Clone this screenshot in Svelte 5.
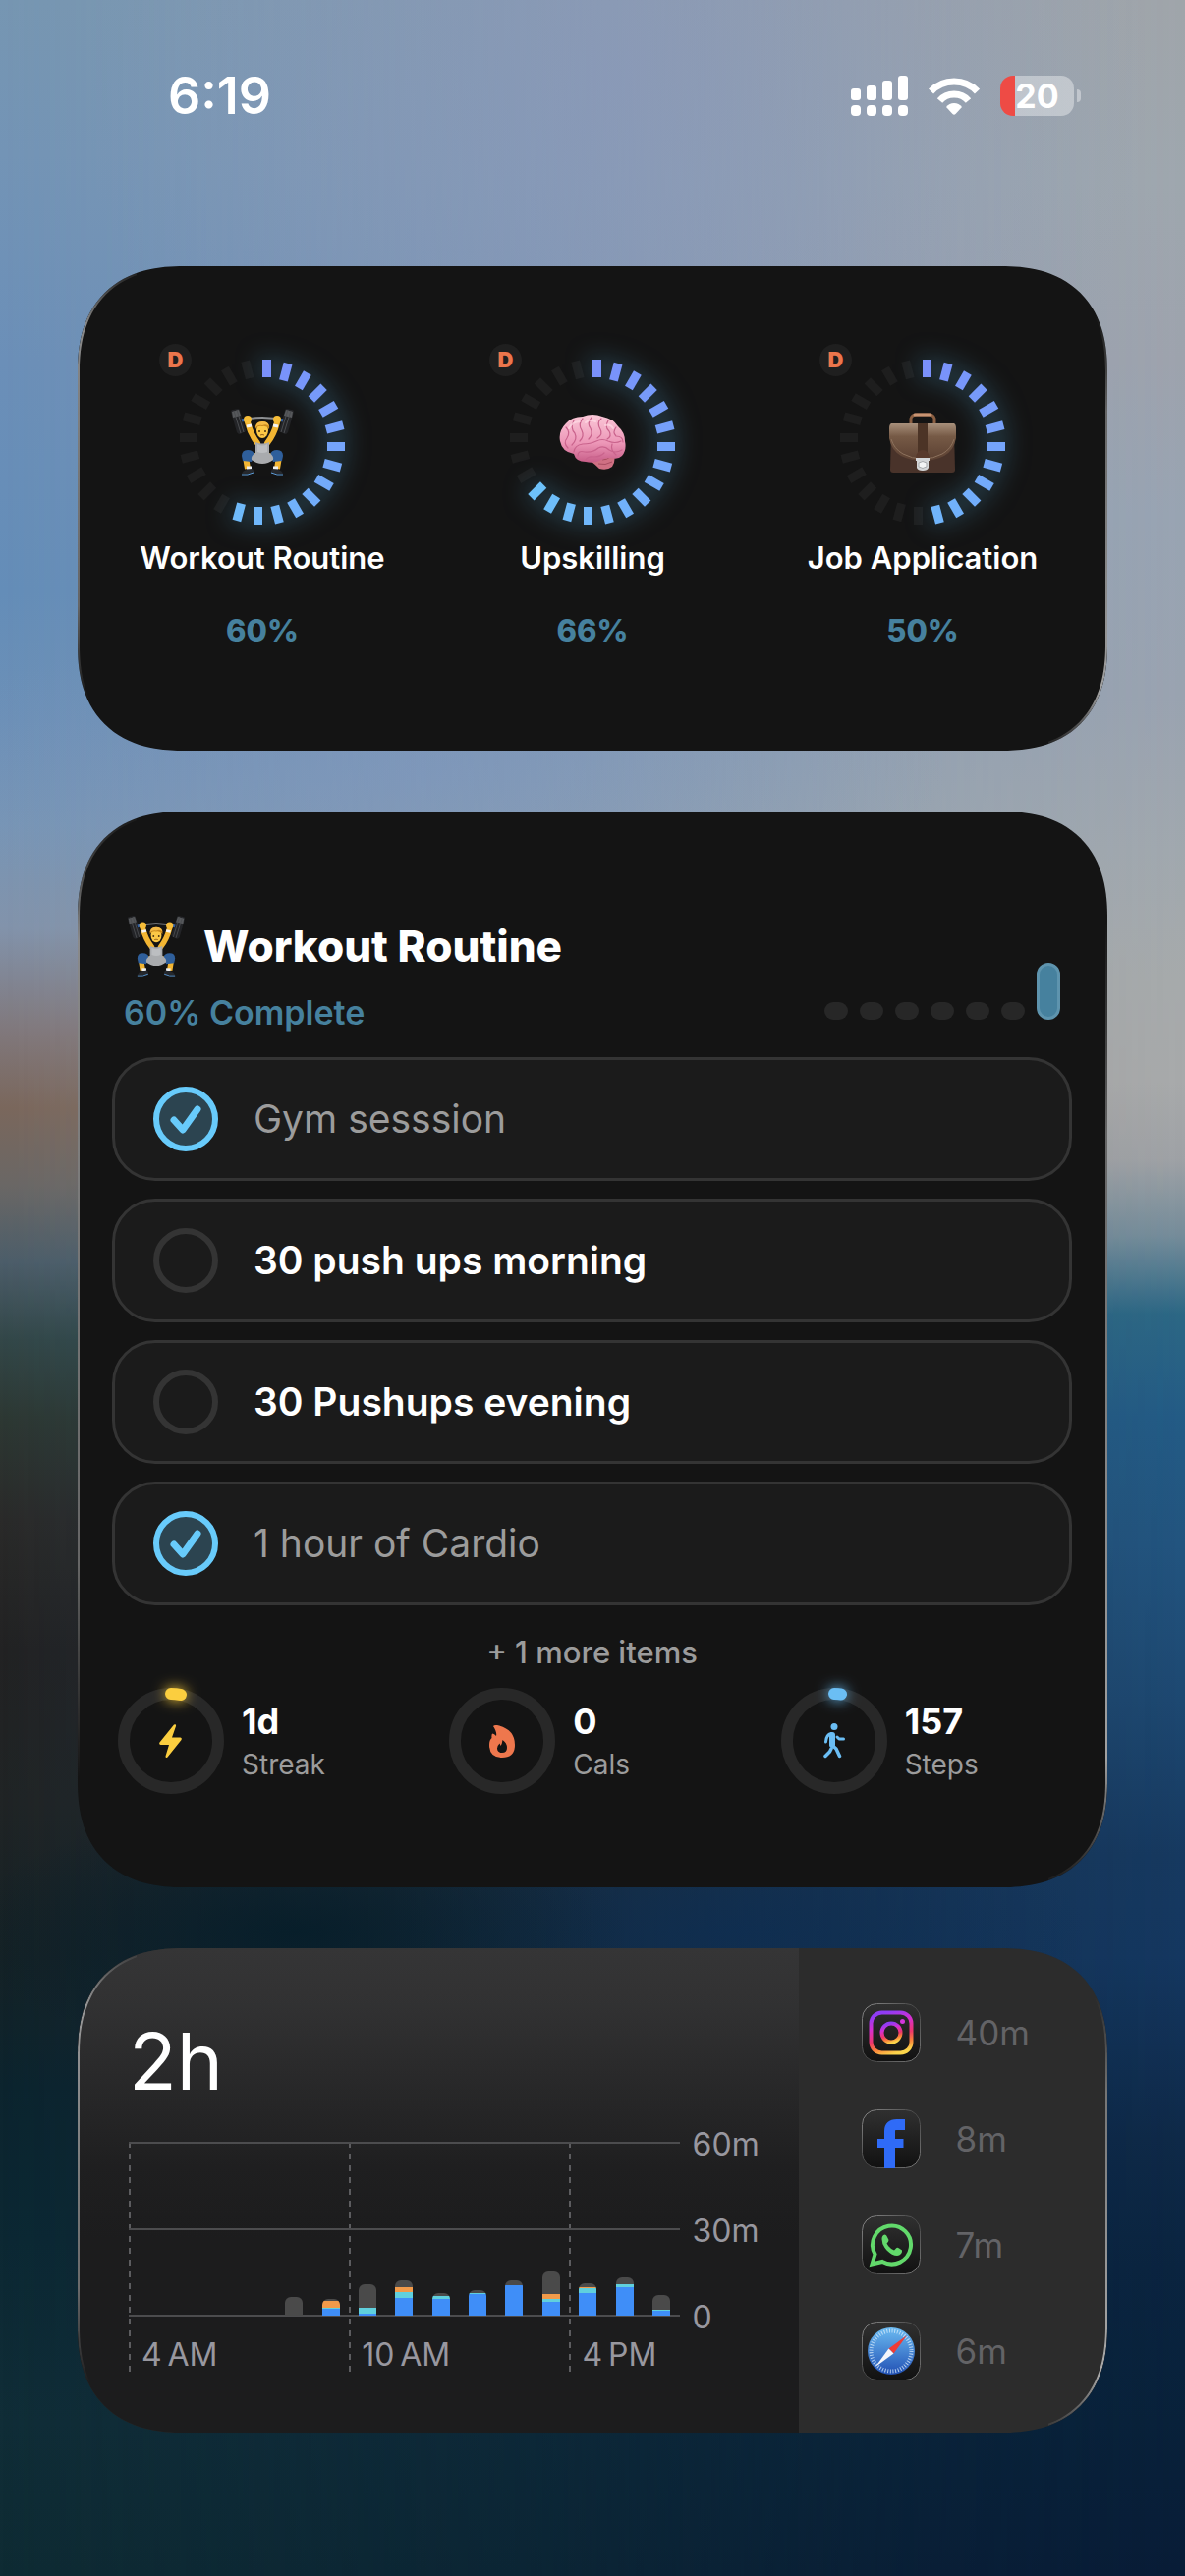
<script>
  const habits = [
    { name: 'Workout Routine', percent: 60, lit: 14, icon: 'lifter' },
    { name: 'Upskilling', percent: 66, lit: 16, icon: 'brain' },
    { name: 'Job Application', percent: 50, lit: 12, icon: 'case' }
  ];

  const tickCount = 24;
  const ticks = Array.from({ length: tickCount }, (_, i) => i);

  // Lit ticks run from violet blue to sky blue around the ring.
  function tickColor(i) {
    const t = i / 16;
    const mix = (a, b) => Math.round(a + (b - a) * t);
    return `rgb(${mix(122, 108)}, ${mix(144, 196)}, 250)`;
  }

  const week = [false, false, false, false, false, false, true];

  let tasks = $state([
    { label: 'Gym sesssion', done: true },
    { label: '30 push ups morning', done: false },
    { label: '30 Pushups evening', done: false },
    { label: '1 hour of Cardio', done: true }
  ]);

  const stats = [
    { value: '1d', label: 'Streak', icon: 'bolt', arc: 10 },
    { value: '0', label: 'Cals', icon: 'flame', arc: 0 },
    { value: '157', label: 'Steps', icon: 'walk', arc: 7 }
  ];

  // Hourly usage from 4 AM, stacked [blue, teal, orange, grey].
  const hours = [
    [0, 0, 0, 0], [0, 0, 0, 0], [0, 0, 0, 0], [0, 0, 0, 0],
    [0, 0, 0, 19], [7, 1, 7, 2], [2, 6, 0, 24], [18, 6, 5, 7],
    [17, 3, 0, 3], [22, 1, 0, 3], [31, 0, 0, 5], [14, 3, 5, 23],
    [23, 5, 1, 4], [29, 3, 0, 7], [5, 1, 0, 15]
  ];
  const kinds = ['blue', 'teal', 'orange', 'grey'];

  const apps = [
    { name: 'Instagram', time: '40m' },
    { name: 'Facebook', time: '8m' },
    { name: 'WhatsApp', time: '7m' },
    { name: 'Safari', time: '6m' }
  ];
</script>

{#snippet lifter()}
  <svg viewBox="0 0 64 68" aria-hidden="true">
    <path d="M10 12Q32 6 54 12" fill="none" stroke="#8d8f92" stroke-width="2" />
    {#each [1, -1] as side}
      <g transform={side === 1 ? '' : 'translate(64 0) scale(-1 1)'}>
        <path d="M0 3Q0 1 2 1L7 0Q9 0 9 2L15 22Q15 24 13 24L9 26Q7 26 6 24Z" fill="#232427" />
        <path d="M1 3L8 1L10 7L2 9Z" fill="#56585b" />
        <path d="M3 2L10 25M6 1L13 24" stroke="#4b4d50" stroke-width="1" />
        <path d="M11 12L15 11" stroke="#2d5fa8" stroke-width="3" />
        <path d="M17 14Q20 26 27 35" fill="none" stroke="#f2b532" stroke-width="6" stroke-linecap="round" />
        <path d="M16 18L21 17" stroke="#f4f4f4" stroke-width="3" />
        <circle cx="17" cy="11" r="4" fill="#f7bd38" />
        <path d="M28 48L15 49L17 61" fill="none" stroke="#f2b532" stroke-width="6" stroke-linejoin="round" />
        <path d="M11 48Q11 42 17 42Q23 42 24 47L21 54L12 53Z" fill="#2f5f9b" />
        <path d="M16 60L21 60" stroke="#eef0f2" stroke-width="3" />
        <path d="M11 66Q12 63 16 62L22 61Q24 64 23 66Z" fill="#25282d" />
        <path d="M11 67H17L23 65" fill="none" stroke="#5b9ad6" stroke-width="1" />
      </g>
    {/each}
    <path d="M25 34Q32 37 39 34L39 45Q44 48 43 52Q38 56 32 56Q26 56 21 52Q20 48 25 45Z" fill="#a9abae" />
    <path d="M27 36Q32 39 37 36L37 44Q32 46 27 44Z" fill="#bcbec1" />
    <ellipse cx="32" cy="22" rx="6" ry="8" fill="#fcc846" />
    <path d="M25 21Q24 13 32 13Q40 13 39 21Q36 17 32 18Q27 17 25 21Z" fill="#c98a1e" />
    <path d="M25 19Q26 13 32 13Q38 13 39 18Q36 15 32 17Q28 16 25 19Z" fill="#f5bb46" />
    <circle cx="29" cy="23" r="1" fill="#4a3212" />
    <circle cx="35" cy="23" r="1" fill="#4a3212" />
    <path d="M30 27Q32 26 34 27" fill="none" stroke="#94611b" />
  </svg>
{/snippet}

{#snippet brain()}
  <svg viewBox="0 0 68 56" aria-hidden="true">
    <defs>
      <linearGradient id="brain-fill" x1="0" y1="0" x2="0" y2="1">
        <stop offset="0" stop-color="#fbc9d8" />
        <stop offset=".6" stop-color="#ec96b7" />
        <stop offset="1" stop-color="#c75d87" />
      </linearGradient>
    </defs>
    <path d="M36 42L56 39Q58 47 54 53Q49 57 41 55Q36 50 33 48Z" fill="#cf7083" />
    <path d="M44 46Q49 46 52 43M40 50Q47 52 54 48" fill="none" stroke="#a84d62" stroke-width="1" />
    <path d="M1 27Q-1 17 7 9Q13 2 24 2Q34-2 44 2Q55 4 60 12Q67 18 67 27Q69 36 64 42Q60 46 53 44Q47 44 43 46Q36 50 27 48Q17 48 15 40Q3 38 1 27Z" fill="url(#brain-fill)" />
    <g fill="none" stroke="#c9638c" stroke-width="1.2" stroke-linecap="round">
      <path d="M7 13Q12 18 8 24Q4 29 9 34M15 6Q11 14 16 19Q19 25 13 31M24 4Q19 10 23 16Q26 22 21 27M33 3Q28 9 32 14Q35 20 30 25M43 4Q38 8 42 15Q45 20 39 24" />
      <path d="M50 6Q46 13 51 17Q54 22 49 25M58 13Q54 18 58 22Q65 22 65 28M15 38Q16 31 24 30Q32 30 38 27Q44 24 50 27Q57 30 63 27" />
      <path d="M19 42Q19 36 26 38Q34 39 40 34Q46 31 51 36Q57 40 64 36M27 46Q29 42 36 43Q42 43 46 39M54 30Q52 36 58 41" />
    </g>
    <path d="M10 14Q14 7 21 7M27 8Q31 4 37 7M47 11Q52 9 55 14" fill="none" stroke="#ffdce6" stroke-width="2" stroke-linecap="round" opacity=".7" />
  </svg>
{/snippet}

{#snippet briefcase()}
  <svg viewBox="0 0 68 61" aria-hidden="true">
    <defs>
      <linearGradient id="case-fill" x1="0" y1="0" x2="0" y2="1">
        <stop offset="0" stop-color="#a8907b" />
        <stop offset=".35" stop-color="#765a46" />
        <stop offset="1" stop-color="#5a3f31" />
      </linearGradient>
    </defs>
    <path d="M22 12V6Q23 2 28 2H40Q45 2 46 6V12" fill="none" stroke="#8b5f42" stroke-width="3" />
    <path d="M26 2H42" stroke="#c99472" stroke-width="3" stroke-linecap="round" />
    <path d="M2 20H66L67 58Q67 61 64 61H4Q1 61 1 58Z" fill="#49332a" />
    <path d="M2 11H66Q68 12 68 16V26Q66 38 56 44Q46 49 34 49Q22 49 12 44Q2 38 0 26V16Q0 12 2 11Z" fill="url(#case-fill)" />
    <path d="M2 27Q5 37 14 42Q23 47 34 47Q45 47 54 42Q63 37 66 27" fill="none" stroke="#8d725d" stroke-width="1" />
    <path d="M29 11H39V40Q34 43 29 40Z" fill="#4c3426" />
    <path d="M27 46Q28 38 34 38Q40 38 41 46Z" fill="#58392b" />
    <path d="M27 46H41V49H40V56Q39 59 34 59Q29 59 28 56V49H27Z" fill="#d4d6d8" />
    <path d="M30 51Q34 48 38 51V55Q34 58 30 55Z" fill="#f3f4f5" stroke="#a6a9ac" />
  </svg>
{/snippet}

<div class="screen">
  <header class="status">
    <time>6:19</time>
    <div class="indicators">
      <svg class="signal" viewBox="0 0 58 41" role="img" aria-label="Signal">
        <g fill="#fff">
          <rect x="0" y="13" width="10" height="12" rx="3" />
          <rect x="16" y="10" width="10" height="15" rx="3" />
          <rect x="32" y="5" width="10" height="20" rx="3" />
          <rect x="48" y="0" width="10" height="25" rx="3" />
          <rect x="0" y="30" width="10" height="11" rx="4" />
          <rect x="16" y="30" width="10" height="11" rx="4" />
          <rect x="32" y="30" width="10" height="11" rx="4" />
          <rect x="48" y="30" width="10" height="11" rx="4" />
        </g>
      </svg>
      <svg class="wifi" viewBox="0 0 52 38" role="img" aria-label="Wi-Fi">
        <g fill="none" stroke="#fff" stroke-width="7">
          <path d="M2.5 14Q12 4 26 4Q40 4 49.500 14" />
          <path d="M11.500 23.500Q17 17 26 17Q35 17 40.500 23.500" />
        </g>
        <path d="M18 30Q21 26 26 26Q31 26 34 30L27.500 37Q26 38.500 24.500 37Z" fill="#fff" />
      </svg>
      <div class="battery"><span class="charge">20</span></div>
    </div>
  </header>

  <main>
    <section class="card habits">
      {#each habits as habit}
        <article class="habit">
          <div class="ring">
            <svg class="ticks" viewBox="-84 -84 168 168" aria-hidden="true">
              {#each ticks.slice(habit.lit) as i}
                <rect class="off" x="0" y="-84" width="9" height="18" transform="rotate({i * 15})" />
              {/each}
              <g class="glow">
                {#each ticks.slice(0, habit.lit) as i}
                  <rect x="0" y="-84" width="9" height="18" fill={tickColor(i)} transform="rotate({i * 15})" />
                {/each}
              </g>
            </svg>
            <div class="emoji {habit.icon}">
              {#if habit.icon === 'lifter'}{@render lifter()}{:else if habit.icon === 'brain'}{@render brain()}{:else}{@render briefcase()}{/if}
            </div>
            <span class="badge">D</span>
          </div>
          <h2>{habit.name}</h2>
          <p>{habit.percent}%</p>
        </article>
      {/each}
    </section>

    <section class="card routine">
      <div class="head">
        <div>
          <div class="title">
            {@render lifter()}
            <h1>Workout Routine</h1>
          </div>
          <p class="progress">60% Complete</p>
        </div>
        <div class="week">
          {#each week as active}<i class:active></i>{/each}
        </div>
      </div>

      <div class="tasks">
        {#each tasks as task}
          <label class="task" class:done={task.done}>
            <span class="tick">
              <input type="checkbox" bind:checked={task.done} />
              <svg viewBox="0 0 66 66" aria-hidden="true">
                <path d="M21 34L30 44L45 23" />
              </svg>
            </span>
            <span>{task.label}</span>
          </label>
        {/each}
      </div>

      <p class="more">+ 1 more items</p>

      <div class="stats">
        {#each stats as stat}
          <div class="stat">
            <svg class="dial {stat.icon}" viewBox="0 0 108 108" aria-hidden="true">
              <circle cx="54" cy="54" r="48" fill="none" stroke="#282828" stroke-width="12" />
              {#if stat.arc}
                <circle class="arc" cx="54" cy="54" r="48" stroke-dasharray="{stat.arc} 400" transform="rotate(-90 54 54)" />
              {/if}
              {#if stat.icon === 'bolt'}
                <path fill="currentColor" d="M57 37.500Q59.500 36.500 59 39L55 50.500H63.500Q65.500 51 64.500 53L50.500 70.500Q48.500 72 48.500 69.500L52 58H43.500Q41.500 57.500 42.500 55.500Z" />
              {:else if stat.icon === 'flame'}
                <path fill="currentColor" fill-rule="evenodd" d="M45 39Q46 37.500 49 38Q67 42 67 58Q67 71 54 71Q41 71 41 58Q41 53 43.500 51Q43 47 44.500 46.500Q46 46.500 48 49Q49 45 45 39ZM54.500 53Q54 57 52.500 59L51.500 56.500Q49 59 49 61.500Q49 66 54 66Q59 66 59 61Q59 56 54.500 53Z" />
              {:else}
                <g fill="none" stroke="currentColor" stroke-linecap="round" stroke-linejoin="round">
                  <circle cx="54" cy="39.500" r="3.500" fill="currentColor" stroke="none" />
                  <path d="M52 48V58" stroke-width="6" />
                  <path d="M51 46.500Q46 47.500 45.500 55" stroke-width="3" />
                  <path d="M57 50L59 52H63.500" stroke-width="3" />
                  <path d="M51.500 58L56 62L59.500 69.500M51 62L49.500 65L45 69.500" stroke-width="3.500" />
                </g>
              {/if}
            </svg>
            <div>
              <strong>{stat.value}</strong>
              <span>{stat.label}</span>
            </div>
          </div>
        {/each}
      </div>
    </section>

    <section class="card usage">
      <div class="today">
        <h2>2h</h2>
        <div class="chart">
          <div class="plot">
            <div class="columns">
              <span>4&thinsp;AM</span><span>10&thinsp;AM</span><span>4&thinsp;PM</span>
            </div>
            <div class="lines"><i></i><i></i></div>
            <div class="bars">
              {#each hours as hour}
                <div class="bar">
                  {#each hour as size, k}
                    {#if size}<i class={kinds[k]} style:height="{size}px"></i>{/if}
                  {/each}
                </div>
              {/each}
            </div>
          </div>
          <div class="axis"><span>60m</span><span>30m</span><span>0</span></div>
        </div>
      </div>

      <ul class="apps">
        {#each apps as app}
          <li>
            <svg viewBox="0 0 60 60" role="img" aria-label={app.name}>
              <defs>
                <linearGradient id="tile" x1="0" y1="0" x2="0" y2="1">
                  <stop offset="0" stop-color="#303030" />
                  <stop offset="1" stop-color="#111" />
                </linearGradient>
                <linearGradient id="tile-edge" x1="0" y1="0" x2="1" y2="1">
                  <stop offset="0" stop-color="#8a8a8a" />
                  <stop offset=".5" stop-color="#444" />
                  <stop offset="1" stop-color="#777" />
                </linearGradient>
                <linearGradient id="insta" x1=".35" y1="0" x2=".65" y2="1">
                  <stop offset="0" stop-color="#8f3cf5" />
                  <stop offset=".3" stop-color="#d62fd0" />
                  <stop offset=".6" stop-color="#f0366a" />
                  <stop offset=".8" stop-color="#f9813a" />
                  <stop offset="1" stop-color="#fbd44a" />
                </linearGradient>
                <linearGradient id="compass" x1="0" y1="0" x2="0" y2="1">
                  <stop offset="0" stop-color="#6cbcf2" />
                  <stop offset="1" stop-color="#2150b4" />
                </linearGradient>
              </defs>
              <rect x=".5" y=".5" width="59" height="59" rx="15" fill="url(#tile)" stroke="url(#tile-edge)" />
              {#if app.name === 'Instagram'}
                <rect x="9.500" y="9.500" width="41" height="41" rx="11" fill="none" stroke="url(#insta)" stroke-width="4" />
                <circle cx="30" cy="30" r="9.500" fill="none" stroke="url(#insta)" stroke-width="4" />
                <circle cx="41.500" cy="18.500" r="2.500" fill="#d437dd" />
              {:else if app.name === 'Facebook'}
                <g fill="none" stroke="#2f6bf7">
                  <path d="M28.500 60V22Q28.500 15.500 35.500 15.500H44" stroke-width="11" />
                  <path d="M16 34.500H42.500" stroke-width="9" />
                </g>
              {:else if app.name === 'WhatsApp'}
                <path d="M10.500 49.500L13.500 39.500A19.500 19.500 0 1 1 21 47Z" fill="none" stroke="#62d96b" stroke-width="4" />
                <path d="M20.500 24Q20.500 20 23.500 19.500Q25 19.500 25.500 21L27.500 25Q27.500 26.500 25.500 28.500Q28 33.500 33 35.500L35.500 33Q36.500 32.500 38 33.500L41 35.500Q41.500 40 36 41Q31 41 25.500 35.500Q20.500 30 20.500 24Z" fill="#62d96b" />
              {:else}
                <circle cx="30" cy="30" r="24" fill="url(#compass)" />
                <circle cx="30" cy="30" r="20.500" fill="none" stroke="#d5e8fa" stroke-width="4" stroke-dasharray="1 1.683" opacity=".8" />
                <path d="M46 14L32.500 32.500L27.500 27.500Z" fill="#ef3b36" />
                <path d="M14 46L27.500 27.500L32.500 32.500Z" fill="#f4f6fa" />
              {/if}
            </svg>
            <span>{app.time}</span>
          </li>
        {/each}
      </ul>
    </section>
  </main>
</div>

<style>
  :global(body) {
    background: #0a1f36;
  }

  .screen {
    position: relative;
    isolation: isolate;
    min-height: 100vh;
    box-sizing: border-box;
    padding: 0 79px 96px;
    font-family: Inter, "Liberation Sans", sans-serif;
    color: #fff;
    background: linear-gradient(
      to bottom,
      #7696b2 0%, #7394b6 6%, #6b8fb8 14%, #648db8 23%, #6c90b7 28%, #7795b5 32%,
      #8293ab 36%, #80787c 40%, #7a675c 43%, #6a6765 46%, #4c5d69 49%, #334748 52%,
      #2d3833 55%, #2a2a29 59%, #222223 64%, #202425 70%, #152226 76%, #0c242e 81%, #0c2833 87%, #102d37 94%, #0e2b33 100%
    );
  }

  .screen::before {
    content: "";
    position: absolute;
    inset: 0;
    z-index: -1;
    background: linear-gradient(
      to bottom,
      #a0a5aa 0%, #9fa7ae 7%, #9ea3ad 14%, #99a4b2 20%, #9aa3b0 27%, #a1a8ae 33%,
      #a6aaab 38%, #a8aaab 42%, #9fa2a6 45%, #748c9a 48%, #2c6785 51%, #235b86 55%,
      #22547f 60%, #1d4871 66%, #163960 72%, #143760 76%, #0e2948 83%, #0a2440 88%, #08213a 94%, #081c37 100%
    );
    mask-image: linear-gradient(to right, transparent, rgba(0, 0, 0, 0.4) 45%, rgba(0, 0, 0, 0.85) 80%, #000);
  }

  .screen::after {
    content: "";
    position: absolute;
    inset: 0;
    z-index: -1;
    background:
      radial-gradient(45% 22% at 52% 3%, rgba(138, 150, 190, 0.5), transparent),
      radial-gradient(45% 6% at 35% 30%, rgba(125, 150, 195, 0.4), transparent),
      radial-gradient(28% 5% at 25% 75%, rgba(4, 28, 40, 0.8), transparent),
      radial-gradient(30% 5% at 62% 75%, rgba(13, 45, 82, 0.7), transparent);
  }

  h1, h2, p, ul {
    margin: 0;
    padding: 0;
  }

  svg {
    display: block;
  }

  .status {
    display: flex;
    justify-content: space-between;
    align-items: center;
    padding: 77px 27px 153px 92px;
  }

  .status time {
    font-size: 52px;
    line-height: 41px;
    font-weight: 600;
  }

  .indicators {
    display: flex;
    align-items: center;
    gap: 21px;
  }

  .signal {
    width: 58px;
    height: 41px;
  }

  .wifi {
    width: 52px;
    height: 38px;
  }

  .battery {
    display: flex;
    align-items: center;
    gap: 3px;
  }

  .battery::after {
    content: "";
    width: 4px;
    height: 13px;
    border-radius: 0 4px 4px 0;
    background: rgba(255, 255, 255, 0.38);
  }

  .charge {
    width: 75px;
    height: 41px;
    border-radius: 13px;
    text-align: center;
    font-size: 34px;
    line-height: 41px;
    font-weight: 700;
    background: linear-gradient(to right, #ee4b45 20%, rgba(255, 255, 255, 0.38) 20%);
  }

  main {
    display: flex;
    flex-direction: column;
    gap: 62px;
  }

  .card {
    position: relative;
    border-radius: 92px;
    background: #141414;
  }

  .card::after {
    content: "";
    position: absolute;
    inset: 0;
    padding: 2px;
    border-radius: 92px;
    pointer-events: none;
    background:
      linear-gradient(to bottom, transparent, rgba(255, 255, 255, 0.5) 12%, rgba(255, 255, 255, 0.35) 70%, transparent 90%) left / 60px 100% no-repeat,
      linear-gradient(to bottom, transparent 10%, rgba(255, 255, 255, 0.35) 30%, rgba(255, 255, 255, 0.6) 88%, transparent) right / 60px 100% no-repeat;
    mask: linear-gradient(#000 0 0) content-box exclude, linear-gradient(#000 0 0);
  }

  @supports (corner-shape: superellipse(1.25)) {
    .card, .card::after {
      border-radius: 108px;
      corner-shape: superellipse(1.25);
    }
  }

  .habits {
    display: grid;
    grid-template-columns: repeat(3, 1fr);
    padding: 95px 20px 102px;
  }

  .habit {
    display: flex;
    flex-direction: column;
    align-items: center;
  }

  .ring {
    position: relative;
    display: grid;
    place-items: center;
    width: 168px;
    height: 168px;
  }

  .ticks {
    grid-area: 1 / 1;
    width: 168px;
    height: 168px;
    overflow: visible;
  }

  .off {
    fill: #1e1e1e;
  }

  .glow {
    filter: drop-shadow(0 0 13px rgba(92, 190, 240, 0.6));
  }

  .emoji {
    grid-area: 1 / 1;
    width: 68px;
  }

  .emoji.lifter {
    width: 64px;
  }

  .badge {
    position: absolute;
    left: -21px;
    top: -16px;
    width: 33px;
    height: 33px;
    border-radius: 50%;
    background: #1f1f1f;
    color: #ec764c;
    text-align: center;
    font-size: 22px;
    line-height: 33px;
    font-weight: 900;
  }

  .habit h2 {
    margin-top: 14px;
    font-size: 31px;
    line-height: 40px;
    font-weight: 600;
  }

  .habit p {
    margin-top: 34px;
    font-size: 31px;
    line-height: 40px;
    font-weight: 800;
    color: #46819e;
  }

  .routine {
    padding: 106px 36px 95px 35px;
  }

  .head {
    display: flex;
    justify-content: space-between;
    align-items: flex-end;
    padding: 0 12px;
  }

  .title {
    display: flex;
    align-items: center;
    gap: 18px;
    padding-left: 3px;
  }

  .title :global(svg) {
    width: 60px;
    height: 62px;
  }

  .title h1 {
    font-size: 44px;
    line-height: 62px;
    font-weight: 800;
  }

  .progress {
    margin-top: 17px;
    font-size: 34px;
    line-height: 40px;
    font-weight: 600;
    color: #46819e;
  }

  .week {
    display: flex;
    align-items: flex-end;
    gap: 12px;
    margin-bottom: 13px;
  }

  .week i {
    width: 24px;
    height: 18px;
    border-radius: 9px;
    background: #272727;
  }

  .week .active {
    box-sizing: border-box;
    height: 58px;
    border: 3px solid #5e94ae;
    border-radius: 12px;
    background: #46819e;
  }

  .tasks {
    display: flex;
    flex-direction: column;
    gap: 18px;
    margin-top: 25px;
  }

  .task {
    display: flex;
    align-items: center;
    gap: 36px;
    padding: 27px 39px;
    border: 3px solid #343434;
    border-radius: 44px;
    background: #1b1b1b;
    font-size: 39px;
    line-height: 48px;
    font-weight: 600;
  }

  .task.done {
    font-weight: 400;
    color: #9c9c9c;
  }

  .tick {
    display: grid;
    height: 66px;
  }

  .tick input {
    grid-area: 1 / 1;
    appearance: none;
    box-sizing: border-box;
    width: 66px;
    height: 66px;
    margin: 0;
    border: 6px solid #343434;
    border-radius: 50%;
  }

  .tick input:checked {
    border-color: #68cbfb;
    background: #2c4450;
  }

  .tick svg {
    grid-area: 1 / 1;
    width: 66px;
    height: 66px;
    pointer-events: none;
    fill: none;
    stroke: none;
    stroke-width: 7px;
    stroke-linecap: round;
    stroke-linejoin: round;
  }

  .tick input:checked + svg {
    stroke: #68cbfb;
  }

  .more {
    margin-top: 30px;
    text-align: center;
    font-size: 31px;
    line-height: 36px;
    font-weight: 500;
    color: #9c9c9c;
  }

  .stats {
    display: grid;
    grid-template-columns: repeat(3, 1fr);
    gap: 46px;
    margin-top: 18px;
    padding: 0 5px 0 6px;
  }

  .stat {
    display: flex;
    align-items: center;
    gap: 18px;
  }

  .dial {
    width: 108px;
    height: 108px;
    overflow: visible;
  }

  .arc {
    fill: none;
    stroke: currentColor;
    stroke-width: 12px;
    stroke-linecap: round;
    filter: drop-shadow(0 0 7px currentColor);
  }

  .bolt {
    color: #fbce3f;
  }

  .flame {
    color: #ee774d;
  }

  .walk {
    color: #6bbef4;
  }

  .stat strong, .stat span {
    display: block;
  }

  .stat strong {
    font-size: 36px;
    line-height: 44px;
    font-weight: 700;
  }

  .stat span {
    margin-top: 4px;
    font-size: 28px;
    line-height: 36px;
    color: #9c9c9c;
  }

  .usage {
    display: flex;
    overflow: hidden;
    background: #2c2c2c;
  }

  .today {
    flex: 0 0 70%;
    box-sizing: border-box;
    padding: 67px 0 60px 52px;
    background: linear-gradient(to bottom, #353536, #313132 12%, #1f1f20 45%, #1c1c1d 60%, #1c1c1d);
  }

  .today h2 {
    font-size: 80px;
    line-height: 96px;
    font-weight: 400;
  }

  .chart {
    display: grid;
    grid-template-columns: 1fr 121px;
    margin-top: 34px;
    font-size: 32px;
    color: #98979f;
  }

  .plot {
    display: grid;
  }

  .plot > div {
    grid-area: 1 / 1;
  }

  .columns {
    display: grid;
    grid-template-columns: 6fr 6fr 3fr;
    height: 236px;
  }

  .columns span {
    align-content: end;
    padding-left: 13px;
    line-height: 38px;
    white-space: nowrap;
    background: repeating-linear-gradient(to bottom, #5c5c5f 0 6px, transparent 6px 12px) left / 2px 100% no-repeat;
  }

  .lines {
    height: 176px;
    border-bottom: 2px solid #4c4c4e;
  }

  .lines i {
    display: block;
    box-sizing: border-box;
    height: 88px;
    border-top: 2px solid #4c4c4e;
  }

  .bars {
    display: grid;
    grid-template-columns: repeat(15, 1fr);
    justify-items: center;
    height: 177px;
  }

  .bar {
    display: flex;
    flex-direction: column-reverse;
    align-self: end;
    width: 18px;
    border-radius: 6px 6px 0 0;
    overflow: hidden;
  }

  .blue {
    background: #3f8ef8;
  }

  .teal {
    background: #60d0dd;
  }

  .orange {
    background: #f19a4a;
  }

  .grey {
    background: #4a4a4a;
  }

  .axis {
    display: flex;
    flex-direction: column;
    justify-content: space-between;
    height: 216px;
    margin-top: -17px;
    padding-left: 13px;
    line-height: 40px;
  }

  .apps {
    display: flex;
    flex-direction: column;
    gap: 48px;
    padding: 56px 0 0 64px;
    list-style: none;
  }

  .apps li {
    display: flex;
    align-items: center;
    gap: 36px;
    font-size: 35px;
    line-height: 60px;
    color: #636366;
  }

  .apps svg {
    width: 60px;
    height: 60px;
  }
</style>
